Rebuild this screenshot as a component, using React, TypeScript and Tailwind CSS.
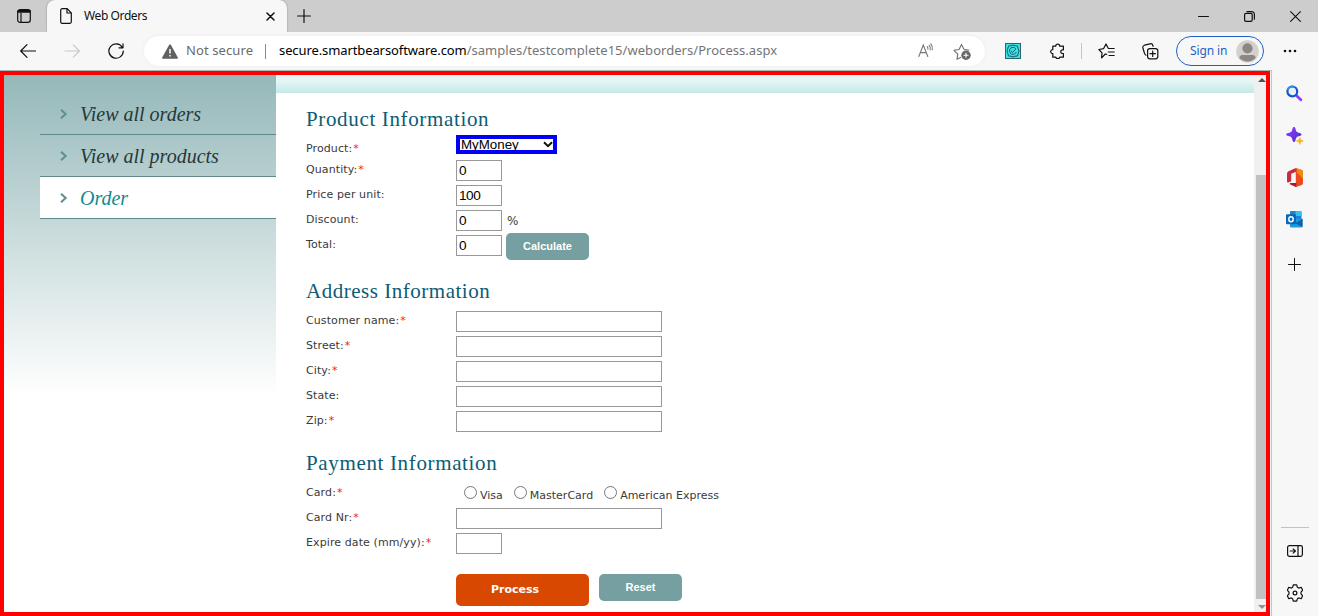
import type { ReactNode } from "react";

const ui = "font-['Noto_Sans','Open_Sans',sans-serif]";

function Svg({ w, h, children }: { w: number; h: number; children: ReactNode }) {
  return (
    <svg width={w} height={h} viewBox={`0 0 ${w} ${h}`} fill="none" stroke="#111" strokeWidth="1.2" strokeLinecap="round" strokeLinejoin="round" className="block shrink-0">
      {children}
    </svg>
  );
}

const Plus = () => (
  <Svg w={14} h={14}>
    <path d="M7 .6v12.8M.6 7h12.8" />
  </Svg>
);

function TabStrip() {
  return (
    <div className="flex h-8 shrink-0 bg-[#cdcdcd]">
      <div className="flex w-[47px] items-center pl-[17px]">
        <Svg w={14} h={14}>
          <rect x=".7" y=".7" width="12.6" height="12.6" rx="2.4" />
          <path d="M1.4 2.4h11.2" strokeWidth="2.6" />
          <path d="M4 4v9" />
        </Svg>
      </div>
      <div className="flex w-60 items-center rounded-t-lg bg-[#f7f7f7] pl-[13px] shadow-[0_0_2px_rgba(0,0,0,0.35)]">
        <Svg w={12} h={16}>
          <path d="M2 .7h5.2l4.1 4.1v8.9a1.6 1.6 0 0 1-1.6 1.6H2.1A1.5 1.5 0 0 1 .7 13.7V2.2A1.5 1.5 0 0 1 2.2.7ZM7 .9V5h4.2" />
        </Svg>
        <span className={`ml-3 flex-1 text-[12px] leading-none tracking-[-0.4px] text-[#111] ${ui}`}>Web Orders</span>
        <span className="mr-3">
          <Svg w={9} h={9}>
            <path d="m1 1 7 7M8 1 1 8" strokeWidth="1.5" />
          </Svg>
        </span>
      </div>
      <div className="flex flex-1 items-center pl-[10px]">
        <Plus />
      </div>
      <div className="flex items-center gap-[35px] pr-[17px]">
        <Svg w={11} h={11}>
          <path d="M.5 5.5h10" strokeWidth="1" />
        </Svg>
        <Svg w={11} h={11}>
          <rect x=".6" y="2.4" width="7.6" height="8" rx="1.4" />
          <path d="M3 .6h4.6a2.8 2.8 0 0 1 2.8 2.8v4.8" />
        </Svg>
        <Svg w={11} h={11}>
          <path d="m.6.6 9.8 9.8m0-9.8L.6 10.4" strokeWidth="1.1" />
        </Svg>
      </div>
    </div>
  );
}

function Toolbar() {
  return (
    <div className="flex h-[38px] shrink-0 items-center bg-[#f7f7f7]">
      <div className="flex w-[144px] items-center gap-7 pl-5">
        <Svg w={16} h={14}>
          <path d="M15.5 7H.8M7 .7.7 7 7 13.3" />
        </Svg>
        <svg width="16" height="14" viewBox="0 0 16 14" fill="none" stroke="#c9c9c9" strokeWidth="1.2" className="shrink-0">
          <path d="M.5 7h14.7M9 .7 15.3 7 9 13.3" />
        </svg>
        <Svg w={16} h={16}>
          <path d="M14.2 4.2A7.2 7.2 0 1 0 15.3 8M15 .8v4h-4" />
        </Svg>
      </div>
      <div className="flex h-[30px] w-[841px] items-center rounded-full bg-white pl-[18px] pr-[14px] shadow-[0_0_4px_rgba(0,0,0,0.05)]">
        <svg width="16" height="15" viewBox="0 0 16 15" className="shrink-0">
          <path d="M7.2.8a.9.9 0 0 1 1.6 0l6.9 12.5c.4.8 0 1.5-.8 1.5H1.1c-.8 0-1.2-.7-.8-1.5Z" fill="#616161" />
          <path d="M8 5v4.6M8 11v1.6" stroke="#fff" strokeWidth="1.5" />
        </svg>
        <span className={`ml-2 w-[79px] whitespace-nowrap text-[13px] tracking-[0.1px] text-[#6b6b6b] ${ui}`}>Not secure</span>
        <span className="h-[15px] w-px bg-[#8a8a8a]" />
        <span className={`ml-[13px] flex-1 whitespace-nowrap text-[13px] tracking-[0.04px] text-[#757575] ${ui}`}>
          <span className="tracking-[-0.1px] text-black">secure.smartbearsoftware.com</span>/samples/testcomplete15/weborders/Process.aspx
        </span>
        <svg width="16" height="15" viewBox="0 0 16 15" fill="none" stroke="#777" strokeWidth="1.1" strokeLinecap="round" className="mb-0.5 shrink-0">
          <path d="M.8 13.5 5.3 2l4.5 11.5M2.400 9.600h5.900M9.300 3.600a3 3 0 0 1 .6 2.500M11.200 2.300a5 5 0 0 1 1 4.600M12.800.9a7 7 0 0 1 1.500 5.800" />
        </svg>
        <svg width="18" height="17" viewBox="0 0 18 17" fill="none" stroke="#6f6f6f" strokeWidth="1.1" strokeLinejoin="round" className="ml-[19px] shrink-0">
          <path d="M8 14.2 4 16.2l.8-5L1 7.3l5-.8L8.500 1.400 11 6.300l5.300.9" />
          <circle cx="13" cy="12.3" r="4.7" fill="#666" stroke="none" />
          <path d="M13 9.8v5M10.5 12.3h5" stroke="#fff" />
        </svg>
      </div>
      <div className="flex flex-1 items-center pl-5">
        <svg width="16" height="16" viewBox="0 0 16 16" fill="none" stroke="#155e68" strokeWidth="1" className="shrink-0">
          <rect x=".5" y=".5" width="15" height="15" fill="#3ce0e5" stroke="#246870" />
          <path d="m8 2 2.2.8L12.5 3l.6 2.3L14 8l-.9 2.7-.6 2.3-2.3.2L8 14l-2.200-.8-2.300-.2-.6-2.300L2 8l.9-2.700L3.500 3l2.300-.2Z" />
          <path d="M10.800 5.800a3.500 3.500 0 1 0 .5 3.200M6 8l1.500 1.400L10.800 6" />
        </svg>
        <span className="ml-[28px]">
          <Svg w={16} h={16}>
            <path d="M3.800 3.200h2.900a2 2 0 1 1 4 0h3.700v3.600h-.8a1.800 1.800 0 1 0 0 3.700h.8v3.700h-3.600a2.100 2.100 0 0 1-4 0h-3v-3.700H3a2 2 0 0 1 0-3.800h.8Z" />
          </Svg>
        </span>
        <span className="ml-4 h-4 w-px bg-[#c5c5c5]" />
        <span className="ml-4">
          <Svg w={17} h={16}>
            <path d="M8.700 11.400 7.300 11 3.600 14.800 4 9.800.9 6.500l4.600-.8L8 1l2.400 4.500h5.800M10.300 9h5.900M11 12.500h5.200" />
          </Svg>
        </span>
        <span className="ml-[27px]">
          <Svg w={17} h={17}>
            <rect x="5.6" y="5.6" width="10.2" height="10.2" rx="2.2" />
            <path d="M10.700 8v5.400M8 10.700h5.400M4 12.200A3 3 0 0 1 2.400 10L.9 5a2.400 2.400 0 0 1 1.600-2.800L8 .8a2.400 2.400 0 0 1 2.900 1.700l.2.8" />
          </Svg>
        </span>
        <div className="ml-[17px] flex h-[30px] w-[88px] items-center rounded-full border border-[#1f5fc4] pl-[13px]">
          <span className={`w-[46px] whitespace-nowrap text-[12px] tracking-[-0.1px] text-[#1f5fc4] ${ui}`}>Sign in</span>
          <svg width="23" height="23" viewBox="0 0 23 23" className="shrink-0">
            <circle cx="11.5" cy="11.5" r="11.3" fill="#d3d0cd" />
            <circle cx="11.5" cy="8.3" r="5.1" fill="#8b8785" />
            <path d="M3.400 18c0-2 1.200-3 3-3h10.200c1.800 0 3 1 3 3a11.200 11.200 0 0 1-16.200 0Z" fill="#8b8785" />
          </svg>
        </div>
        <svg width="14" height="4" viewBox="0 0 14 4" className="ml-[19px] shrink-0" fill="#111">
          <circle cx="2" cy="2" r="1.3" />
          <circle cx="7" cy="2" r="1.3" />
          <circle cx="12" cy="2" r="1.3" />
        </svg>
      </div>
    </div>
  );
}

function NavItem({ label, active = false }: { label: string; active?: boolean }) {
  return (
    <div className={`flex h-[42px] items-center border-b border-[#5f8a8b] pl-5 ${active ? "bg-white" : ""}`}>
      <svg width="8" height="10" viewBox="0 0 8 10" fill="none" stroke="#5b9093" strokeWidth="2" className="shrink-0">
        <path d="m1 .8 4.7 4.2L1 9.2" />
      </svg>
      <span className={`ml-3 whitespace-nowrap font-['Liberation_Serif',serif] text-[20px] italic ${active ? "text-[#0f8a90]" : "text-[#26383a]"}`}>{label}</span>
    </div>
  );
}

function Heading({ children, className }: { children: ReactNode; className: string }) {
  return (
    <h2 className={`whitespace-nowrap font-['Liberation_Serif',serif] text-[21px] leading-6 text-[#0b5c75] ${className}`}>
      {children}
    </h2>
  );
}

function Star() {
  return <span className="ml-px text-[#f5200a]">*</span>;
}

function Row({ label, required = false, children }: { label: string; required?: boolean; children: ReactNode }) {
  return (
    <div className="flex h-[25px] items-start">
      <label className="w-[150px] shrink-0 whitespace-nowrap pt-[5px] leading-[14px]">
        {label}
        {required && <Star />}
      </label>
      {children}
    </div>
  );
}

function Field({ value = "", wide = false }: { value?: string; wide?: boolean }) {
  return (
    <input
      defaultValue={value}
      className={`mt-0.5 h-[21px] shrink-0 border border-[#999] bg-white pl-[2px] font-['Liberation_Sans',sans-serif] text-[13.6px] tracking-[-0.45px] text-black outline-none ${wide ? "w-[206px]" : "w-[46px]"}`}
    />
  );
}

function Radio({ label }: { label: string }) {
  return (
    <span className="flex items-start">
      <span className="mt-[5px] size-[13px] rounded-full border border-[#767676] bg-white" />
      <span className="ml-[3px] whitespace-nowrap pt-[8px] leading-[14px] tracking-normal">{label}</span>
    </span>
  );
}

function OrderForm() {
  return (
    <form className="pl-[30px] pt-[14px] font-['DejaVu_Sans',sans-serif] text-[11px] tracking-[0.1px] text-[#3a3a3a]">
      <Heading className="h-7 tracking-[0.65px]">Product Information</Heading>
      <div className="flex h-[23px] items-start">
        <label className="w-[150px] pt-[7px] leading-[14px]">
          Product:<Star />
        </label>
        <div className="flex h-[19px] w-[101px] items-center overflow-hidden border-4 border-[#0000f5] bg-white pl-px font-['Liberation_Sans',sans-serif] text-[13.33px] leading-[12px] text-black">
          <span className="flex-1 tracking-normal">MyMoney</span>
          <svg width="10" height="7" viewBox="0 0 10 7" fill="none" stroke="#111" strokeWidth="2" className="shrink-0">
            <path d="m1 1.2 4 4 4-4" />
          </svg>
        </div>
      </div>
      <Row label="Quantity:" required><Field value="0" /></Row>
      <Row label="Price per unit:"><Field value="100" /></Row>
      <Row label="Discount:">
        <Field value="0" />
        <span className="pl-[5px] pt-[5px] text-[12px] leading-[16px]">%</span>
      </Row>
      <Row label="Total:">
        <Field value="0" />
        <button type="button" className="ml-1 h-[27px] w-[83px] shrink-0 rounded-[5px] bg-[#759fa0] font-['Liberation_Sans',sans-serif] text-[11px] font-bold tracking-normal text-white">Calculate</button>
      </Row>
      <section className="pt-[21px]">
        <Heading className="h-[30px] tracking-[0.52px]">Address Information</Heading>
        <Row label="Customer name:" required><Field wide /></Row>
        <Row label="Street:" required><Field wide /></Row>
        <Row label="City:" required><Field wide /></Row>
        <Row label="State:"><Field wide /></Row>
        <Row label="Zip:" required><Field wide /></Row>
      </section>
      <section className="pt-[17px]">
        <Heading className="h-[30px] tracking-[0.65px]">Payment Information</Heading>
        <Row label="Card:" required>
          <div className="flex gap-[11px] pl-2">
            <Radio label="Visa" />
            <Radio label="MasterCard" />
            <Radio label="American Express" />
          </div>
        </Row>
        <Row label="Card Nr:" required><Field wide /></Row>
        <Row label="Expire date (mm/yy):" required><Field /></Row>
      </section>
      <div className="flex items-start gap-[10px] pl-[150px] pt-[18px] tracking-normal">
        <button type="button" className="h-8 w-[133px] rounded-[5px] bg-[#d84800] pr-[15px] text-[11px] font-bold text-white">Process</button>
        <button type="button" className="h-[27px] w-[83px] rounded-[5px] bg-[#759fa0] font-['Liberation_Sans',sans-serif] text-[11px] font-bold text-white">Reset</button>
      </div>
    </form>
  );
}

function SideRail() {
  return (
    <aside className="flex flex-1 flex-col items-center border-l border-[#c6c6c6] bg-[#f7f7f7] pr-px pt-[15px]">
      <svg width="17" height="17" viewBox="0 0 17 17" fill="none" className="shrink-0">
        <path d="m10.6 10.8 4.2 4" stroke="#8a3ff0" strokeWidth="2.8" strokeLinecap="round" />
        <circle cx="6.3" cy="6.4" r="4.9" fill="#e4f4fc" stroke="#1455cf" strokeWidth="2.2" />
        <path d="M1.6 5a4.9 4.9 0 0 1 7-2.9" stroke="#2b93e8" strokeWidth="2" />
      </svg>
      <svg width="18" height="18" viewBox="0 0 18 18" className="mt-[25px] shrink-0">
        <defs>
          <linearGradient id="star" x1="0" y1="0" x2="1" y2="1">
            <stop stopColor="#9b40f5" />
            <stop offset=".5" stopColor="#6d35e8" />
            <stop offset="1" stopColor="#4b2bd0" />
          </linearGradient>
        </defs>
        <path d="M8 0c.9 0 1.200.5 1.500 1.800.7 3 1.200 3.500 4.200 4.200 2.400.6 2.400 2.400 0 3-3 .7-3.500 1.200-4.200 4.200-.5 2.400-2.500 2.400-3 0C5.800 10.200 5.300 9.700 2.300 9c-2.900-.6-2.900-2.400 0-3 3-.7 3.500-1.200 4.200-4.200C6.800.5 7.100 0 8 0Z" fill="url(#star)" />
        <path d="M13.800 10.500c.5 2.300 1 2.800 3.500 3.400-2.500.6-3 1.100-3.500 3.500-.5-2.400-1-2.900-3.500-3.500 2.500-.6 3-1.100 3.500-3.400Z" fill="#f7b51c" stroke="#f7b51c" strokeWidth=".8" />
      </svg>
      <svg width="16" height="19" viewBox="0 0 16 19" className="mt-[23px] shrink-0">
        <path d="M8.800 0 1.500 3.300Q0 4 0 5.700v7.600q0 1.500 1.400 1.200l2.800-1.200V5.800l5-2Z" fill="#c92c3c" />
        <path d="M8.800 0 14.800 2Q16 2.600 16 4v11q0 1.400-1.200 1.900L8.800 19Z" fill="#ea4a1e" />
        <path d="M10 .4 14.800 2Q16 2.600 16 4v7L10 4.500Z" fill="#f08a12" />
        <path d="M3.300 15.100h6.100v3.700L8.800 19 3.300 16.600Q2 15.800 3.300 15.100Z" fill="#a81c29" />
      </svg>
      <svg width="17" height="17" viewBox="0 0 17 17" className="mt-[24px] shrink-0">
        <rect x="4" y="0" width="11.5" height="13" rx="1" fill="#1a84d4" />
        <path d="M9.500 0h5q1 0 1 1v4h-6Z" fill="#35bdf0" />
        <path d="M4 8h12.500v7.300q0 1.200-1.200 1.200H5.200Q4 16.500 4 15.300Z" fill="#1c9be0" />
        <path d="m16.500 7.500-7 4.700 7 3.800Z" fill="#115fa5" />
        <rect x="0" y="3.2" width="10" height="10" rx="1" fill="#0768b8" />
        <ellipse cx="5" cy="8.2" rx="2.2" ry="2.5" fill="none" stroke="#fff" strokeWidth="1.4" />
      </svg>
      <div className="mt-[30px]">
        <Svg w={13} h={13}>
          <path d="M6.500.5v12M.5 6.500h12" strokeWidth="1" />
        </Svg>
      </div>
      <div className="mt-auto h-px w-7 bg-[#c3c3c3]" />
      <div className="mt-[17px]">
        <Svg w={16} h={12}>
          <rect x=".6" y=".6" width="14.8" height="10.8" rx="1.8" />
          <path d="M11 1v10M3.200 6h5M6.200 3.800 8.400 6 6.200 8.200" />
        </Svg>
      </div>
      <div className="mb-[14px] mt-[27px]">
        <Svg w={16} h={18}>
          <path d="M6.300.8h3.400l.7 2.500 1.300.8 2.500-.8 1.500 2.900-1.700 1.900v1.800l1.700 1.900-1.500 2.900-2.500-.8-1.300.8-.7 2.500H6.300l-.7-2.500-1.300-.8-2.500.8-1.500-2.900L2 9.900V8.100L.3 6.200l1.500-2.900 2.500.8 1.300-.8Z" />
          <circle cx="8" cy="9" r="1.9" />
        </Svg>
      </div>
    </aside>
  );
}

export default function App() {
  return (
    <div className="flex h-[616px] w-[1318px] flex-col overflow-hidden bg-[#f7f7f7]">
      <TabStrip />
      <Toolbar />
      <div className="flex min-h-0 flex-1">
        <div className="w-[1271px] shrink-0 border-t border-[#a9b7b9] bg-[#f7f7f7] pr-px">
          <div className="flex h-[545px] border-4 border-[#ff0000] bg-white">
            <nav className="w-[272px] shrink-0 bg-[linear-gradient(#95b8b9_0px,#ffffff_320px)] pl-9 pt-[18px]">
              <NavItem label="View all orders" />
              <NavItem label="View all products" />
              <NavItem label="Order" active />
            </nav>
            <main className="min-w-0 flex-1">
              <div className="h-[18px] bg-[linear-gradient(#e5f6f6_35%,#c3e9e8)]" />
              <OrderForm />
            </main>
            <div className="flex w-3 shrink-0 flex-col items-end bg-[#f0f0f0]">
              <svg width="9" height="10" viewBox="0 0 9 10" className="shrink-0">
                <path d="m1 7 4-4 4 4Z" fill="#505050" />
              </svg>
              <div className="mt-[90px] h-[424px] w-[10px] bg-[#c1c1c1]" />
              <svg width="9" height="10" viewBox="0 0 9 10" className="mt-[2px] shrink-0">
                <path d="m1 4 4 4 4-4Z" fill="#909090" />
              </svg>
            </div>
          </div>
        </div>
        <SideRail />
      </div>
    </div>
  );
}
